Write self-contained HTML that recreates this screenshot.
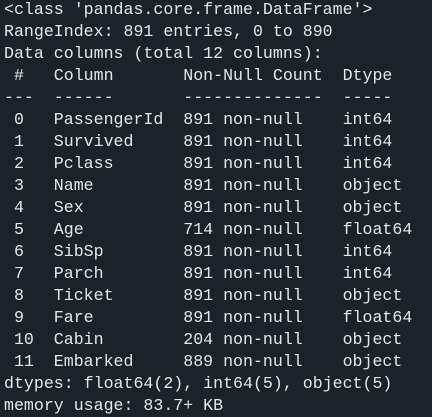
<!DOCTYPE html>
<html><head><style>
html,body{margin:0;padding:0;background:#1c2229;width:432px;height:415px;overflow:hidden}
pre{margin:0;position:absolute;left:4px;top:-1px;font-family:"Liberation Mono",monospace;font-size:16.6px;line-height:22px;color:#e6e6e6;white-space:pre}
</style></head><body><pre>&lt;class 'pandas.core.frame.DataFrame'&gt;
RangeIndex: 891 entries, 0 to 890
Data columns (total 12 columns):
 #   Column       Non-Null Count  Dtype  
---  ------       --------------  -----  
 0   PassengerId  891 non-null    int64  
 1   Survived     891 non-null    int64  
 2   Pclass       891 non-null    int64  
 3   Name         891 non-null    object 
 4   Sex          891 non-null    object 
 5   Age          714 non-null    float64
 6   SibSp        891 non-null    int64  
 7   Parch        891 non-null    int64  
 8   Ticket       891 non-null    object 
 9   Fare         891 non-null    float64
 10  Cabin        204 non-null    object 
 11  Embarked     889 non-null    object 
dtypes: float64(2), int64(5), object(5)
memory usage: 83.7+ KB</pre></body></html>
